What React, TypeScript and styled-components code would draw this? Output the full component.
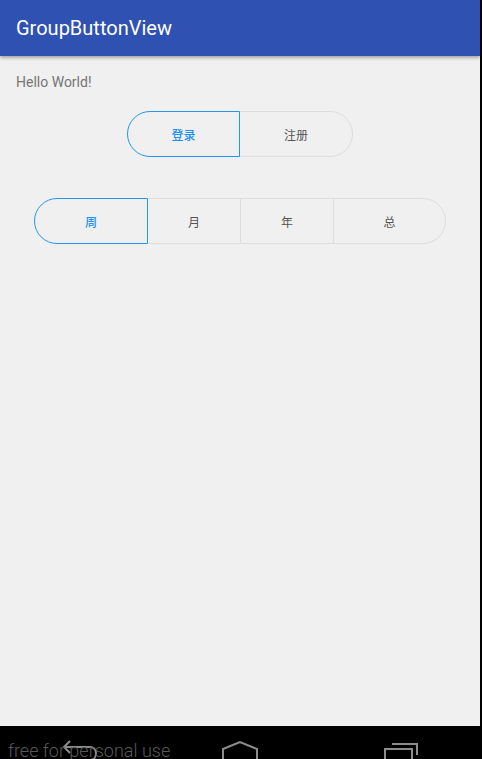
import React, { useState } from "react";
import styled, { createGlobalStyle, css } from "styled-components";

const GlobalStyle = createGlobalStyle`
  html, body {
    margin: 0;
    padding: 0;
    background: #000;
  }
  body {
    font-family: Roboto, "Noto Sans CJK SC", sans-serif;
  }
`;

const Device = styled.div`
  position: relative;
  width: 482px;
  height: 759px;
  overflow: hidden;
  display: flex;
  flex-direction: column;
  background: #000;
`;

const Screen = styled.div`
  width: 480px;
  flex: 1;
  display: flex;
  flex-direction: column;
  background: #f0f0f0;
`;

const AppBar = styled.header`
  height: 56px;
  flex: none;
  display: flex;
  align-items: center;
  padding: 0 16px;
  background: #2f51b1;
  color: #fff;
  font-size: 20px;
  box-shadow: 0 2px 3px rgba(0, 0, 0, 0.3);
  position: relative;
  z-index: 1;
`;

const Content = styled.main`
  flex: 1;
  display: flex;
  flex-direction: column;
  padding: 16px;
`;

const Hello = styled.div`
  font-size: 14px;
  line-height: 20px;
  color: #757575;
`;

const Group = styled.div<{ $top: number }>`
  display: flex;
  align-self: center;
  height: 46px;
  margin-top: ${({ $top }) => $top}px;
`;

const Segment = styled.button<{ $active: boolean; $width: number; $pos: "first" | "middle" | "last" }>`
  width: ${({ $width }) => $width}px;
  height: 46px;
  margin: 0;
  padding: 0;
  background: transparent;
  border: 1px solid ${({ $active }) => ($active ? "#2196f3" : "#dddddd")};
  color: ${({ $active }) => ($active ? "#1e90f0" : "#555555")};
  font-family: "Noto Sans CJK SC", sans-serif;
  font-size: 12px;
  font-weight: ${({ $active }) => ($active ? 500 : 400)};
  cursor: pointer;
  outline: none;
  ${({ $pos }) =>
    $pos === "first"
      ? css`
          border-radius: 23px 0 0 23px;
        `
      : $pos === "last"
      ? css`
          border-radius: 0 23px 23px 0;
        `
      : css`
          border-radius: 0;
        `}
  ${({ $active }) =>
    $active &&
    css`
      position: relative;
      z-index: 1;
    `}
  & + & {
    margin-left: -1px;
  }
`;

const NavBar = styled.nav`
  height: 33px;
  flex: none;
  width: 480px;
  background: #000;
  position: relative;
`;

const NavIcon = styled.svg<{ $left: number }>`
  position: absolute;
  top: 0;
  left: ${({ $left }) => $left}px;
`;

const Watermark = styled.div`
  position: absolute;
  left: 8px;
  top: 13px;
  font-family: Roboto, sans-serif;
  font-weight: 300;
  font-size: 18px;
  line-height: 24px;
  color: #595959;
  white-space: nowrap;
  pointer-events: none;
`;

type Item = { label: string; width: number };

const ButtonGroup: React.FC<{ items: Item[]; top: number }> = ({ items, top }) => {
  const [active, setActive] = useState(0);
  return (
    <Group $top={top}>
      {items.map((item, i) => (
        <Segment
          key={item.label}
          $active={i === active}
          $width={item.width}
          $pos={i === 0 ? "first" : i === items.length - 1 ? "last" : "middle"}
          onClick={() => setActive(i)}
        >
          {item.label}
        </Segment>
      ))}
    </Group>
  );
};

const App: React.FC = () => (
  <>
    <GlobalStyle />
    <Device>
      <Screen>
        <AppBar>GroupButtonView</AppBar>
        <Content>
          <Hello>Hello World!</Hello>
          <ButtonGroup
            top={19}
            items={[
              { label: "登录", width: 113 },
              { label: "注册", width: 114 },
            ]}
          />
          <ButtonGroup
            top={41}
            items={[
              { label: "周", width: 114 },
              { label: "月", width: 94 },
              { label: "年", width: 94 },
              { label: "总", width: 113 },
            ]}
          />
        </Content>
      </Screen>
      <NavBar>
        <NavIcon $left={58} width="46" height="33" viewBox="0 0 46 33" fill="none" stroke="#8c8c8c" strokeWidth="2">
          <path d="M6 21 H32 C40 21 40 34 32 34 H20" />
          <path d="M12 15 L6 21 L12 27" />
        </NavIcon>
        <NavIcon $left={218} width="44" height="33" viewBox="0 0 44 33" fill="none" stroke="#8c8c8c" strokeWidth="2">
          <path d="M5 36 V23 L22 16 L39 23 V36" />
        </NavIcon>
        <NavIcon $left={380} width="44" height="33" viewBox="0 0 44 33" fill="none" stroke="#8c8c8c" strokeWidth="2">
          <path d="M12 18 H37 V29" />
          <rect x="5" y="23" width="27" height="14" />
        </NavIcon>
        <Watermark>free for personal use</Watermark>
      </NavBar>
    </Device>
  </>
);

export default App;
